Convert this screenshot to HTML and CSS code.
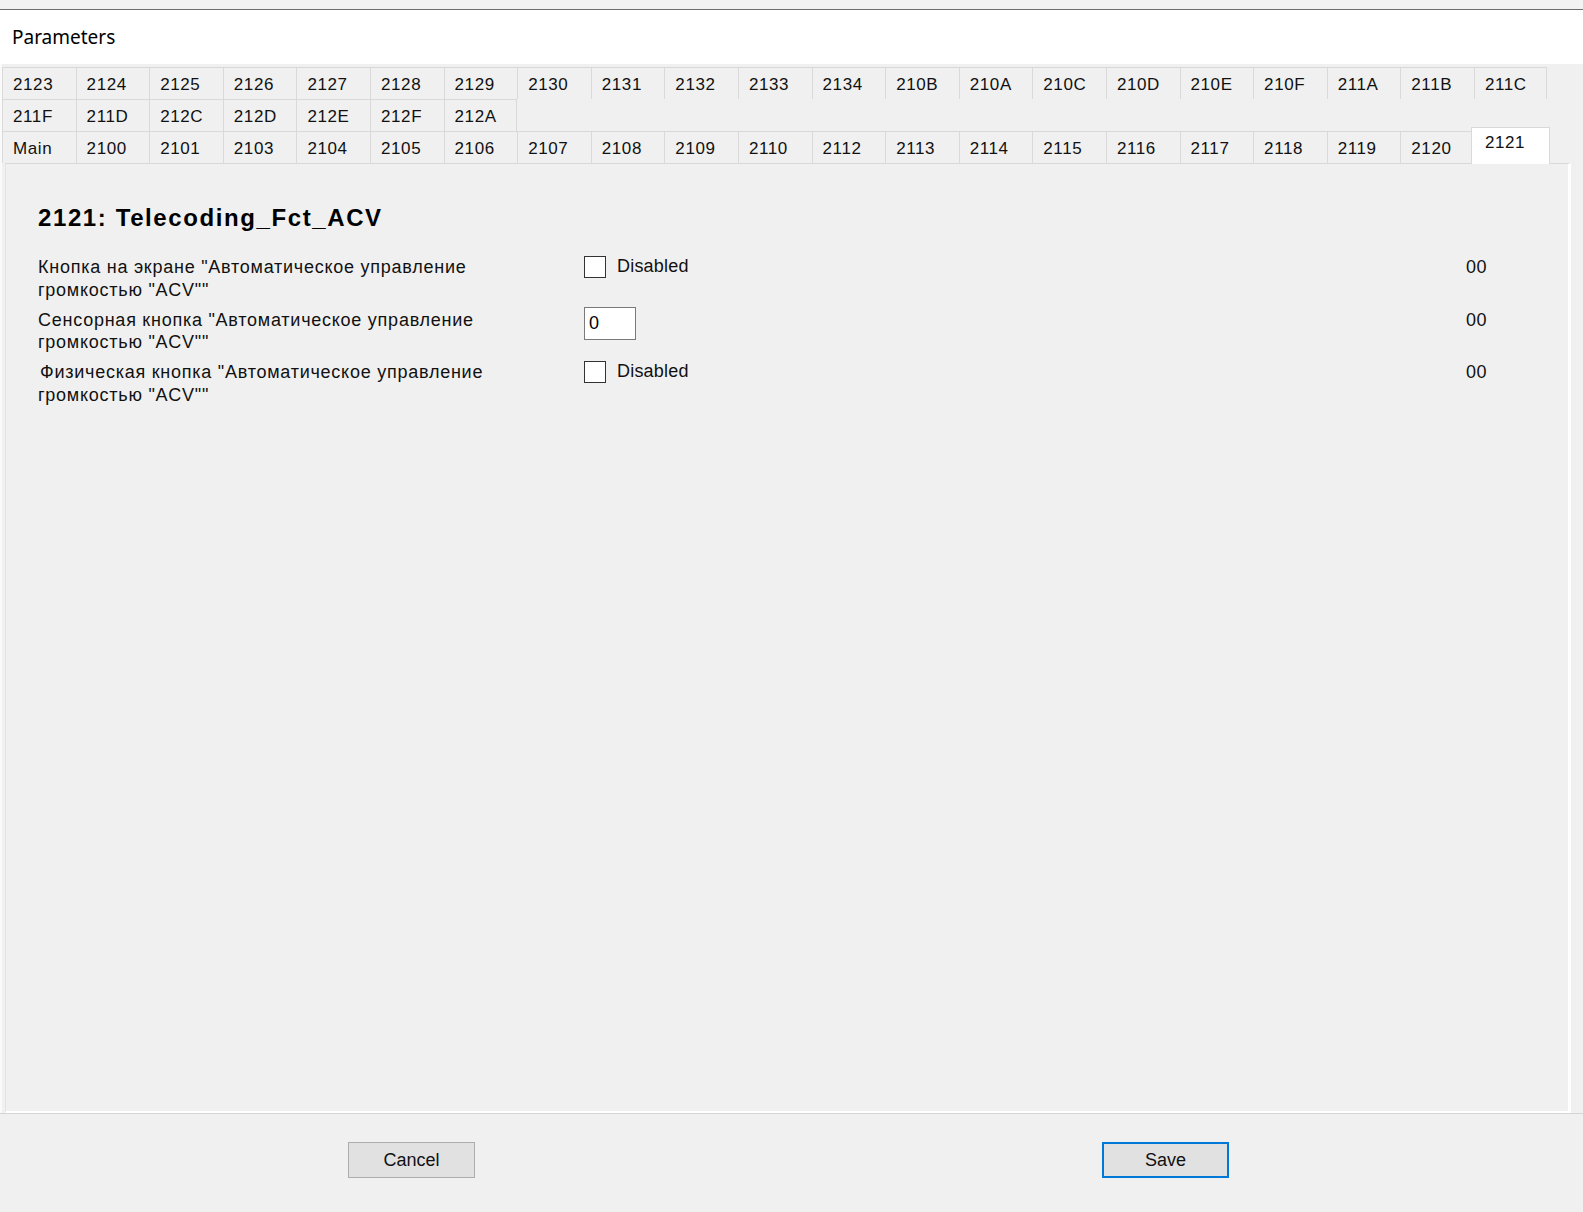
FILE: index.html
```html
<!DOCTYPE html>
<html lang="ru">
<head>
<meta charset="utf-8">
<title>Parameters</title>
<link rel="stylesheet" href="styles.css">
</head>
<body>
<div class="window">
  <div class="topbar"></div>
  <div class="header"><span class="title">Parameters</span></div>

  <div class="tabcontrol">
    <div class="tabrow">
      <div class="tab">2123</div><div class="tab">2124</div><div class="tab">2125</div><div class="tab">2126</div><div class="tab">2127</div><div class="tab">2128</div><div class="tab">2129</div><div class="tab">2130</div><div class="tab">2131</div><div class="tab">2132</div><div class="tab">2133</div><div class="tab">2134</div><div class="tab">210B</div><div class="tab">210A</div><div class="tab">210C</div><div class="tab">210D</div><div class="tab">210E</div><div class="tab">210F</div><div class="tab">211A</div><div class="tab">211B</div><div class="tab">211C</div>
    </div>
    <div class="tabrow">
      <div class="tab">211F</div><div class="tab">211D</div><div class="tab">212C</div><div class="tab">212D</div><div class="tab">212E</div><div class="tab">212F</div><div class="tab">212A</div>
    </div>
    <div class="tabrow">
      <div class="tab">Main</div><div class="tab">2100</div><div class="tab">2101</div><div class="tab">2103</div><div class="tab">2104</div><div class="tab">2105</div><div class="tab">2106</div><div class="tab">2107</div><div class="tab">2108</div><div class="tab">2109</div><div class="tab">2110</div><div class="tab">2112</div><div class="tab">2113</div><div class="tab">2114</div><div class="tab">2115</div><div class="tab">2116</div><div class="tab">2117</div><div class="tab">2118</div><div class="tab">2119</div><div class="tab">2120</div><div class="tab tab-active">2121</div>
    </div>

    <div class="page">
      <h1 class="page-title">2121: Telecoding_Fct_ACV</h1>

      <div class="param">
        <div class="param-label">Кнопка на экране "Автоматическое управление громкостью "ACV""</div>
        <div class="param-control">
          <label class="check"><span class="check-box"></span><span>Disabled</span></label>
        </div>
        <div class="param-value">00</div>
      </div>

      <div class="param">
        <div class="param-label">Сенсорная кнопка "Автоматическое управление громкостью "ACV""</div>
        <div class="param-control">
          <input class="field" type="text" value="0">
        </div>
        <div class="param-value">00</div>
      </div>

      <div class="param">
        <div class="param-label param-label-indent">Физическая кнопка "Автоматическое управление громкостью "ACV""</div>
        <div class="param-control">
          <label class="check"><span class="check-box"></span><span>Disabled</span></label>
        </div>
        <div class="param-value">00</div>
      </div>
    </div>
  </div>

  <div class="footer">
    <button class="btn btn-cancel" type="button">Cancel</button>
    <button class="btn btn-save" type="button">Save</button>
  </div>
</div>
</body>
</html>
```

FILE: styles.css
```css
* {
  box-sizing: border-box;
}

html, body {
  margin: 0;
  padding: 0;
  background: #f0f0f0;
}

.window {
  width: 1583px;
  height: 1212px;
  overflow: hidden;
  font-family: "Liberation Sans", Arial, sans-serif;
  color: #111;
}

/* strip above the dialog */
.topbar {
  height: 10px;
  background: #f3f3f3;
  border-bottom: 1px solid #6e6e6e;
}

.header {
  height: 54px;
  background: #ffffff;
  padding-left: 12px;
  display: flex;
  align-items: center;
}

.title {
  font-family: "Noto Sans", "Open Sans", sans-serif;
  font-size: 19px;
  color: #000;
  margin-top: -1px;
}

/* tab control */
.tabcontrol {
  background: #f0f0f0;
  padding-top: 3px;
  border-left: 2px solid #fafafa;
}

.tabrow {
  display: flex;
  height: 32px;
}

.tab {
  width: 73.6px;
  height: 32px;
  flex: none;
  padding-left: 10px;
  font-size: 17px;
  letter-spacing: 0.6px;
  line-height: 33px;
  color: #111;
  background: #f0f0f0;
  border-top: 1px solid #d9d9d9;
  border-left: 1px solid #d9d9d9;
}

.tab:last-child {
  border-right: 1px solid #d9d9d9;
}

.tab-active {
  width: 79px;
  height: 37px;
  margin-top: -4px;
  margin-left: -3px;
  background: #ffffff;
  line-height: 30px;
  padding-left: 13px;
  position: relative;
  z-index: 1;
}

/* tab page */
.page {
  margin-left: 3px;
  width: 1566px;
  height: 950px;
  background: #f0f0f0;
  border-top: 1px solid #d9d9d9;
  border-left: 1px solid #e4e4e4;
  border-right: 3px solid #ffffff;
  border-bottom: 2px solid #ffffff;
  padding: 39px 0 0 32px;
}

.page-title {
  margin: 0 0 22px 0;
  font-size: 24px;
  line-height: 30px;
  font-weight: bold;
  letter-spacing: 1.6px;
  color: #000;
}

.param {
  display: flex;
  height: 52.5px;
  font-size: 18px;
  line-height: 22.5px;
}

.param-label {
  width: 546px;
  flex: none;
  padding-top: 1px;
  padding-right: 30px;
  letter-spacing: 0.75px;
}

.param-label-indent {
  text-indent: 2px;
}

.param-control {
  width: 882px;
  flex: none;
  letter-spacing: 0.2px;
}

.param-value {
  flex: none;
  padding-top: 1px;
  letter-spacing: 0.4px;
}

.check {
  display: flex;
  align-items: center;
  gap: 11px;
  height: 22px;
}

.check-box {
  width: 22px;
  height: 22px;
  background: #ffffff;
  border: 1px solid #333333;
  margin-top: 2px;
}

.field {
  width: 52px;
  height: 33px;
  margin: 0;
  margin-top: -1px;
  padding: 0 0 0 4px;
  border: 1px solid #7a7a7a;
  background: #ffffff;
  font-family: "Liberation Sans", Arial, sans-serif;
  font-size: 18px;
  color: #000;
}

/* dialog buttons */
.footer {
  height: 98px;
  border-top: 1px solid #d4d4d4;
  display: flex;
  align-items: flex-start;
  padding-top: 28px;
}

.btn {
  width: 127px;
  height: 36px;
  background: #e1e1e1;
  border: 1px solid #adadad;
  font-family: "Liberation Sans", Arial, sans-serif;
  font-size: 18px;
  color: #111;
  padding: 0;
}

.btn-cancel {
  margin-left: 348px;
}

.btn-save {
  margin-left: 627px;
  border: 2px solid #0078d7;
}
```
